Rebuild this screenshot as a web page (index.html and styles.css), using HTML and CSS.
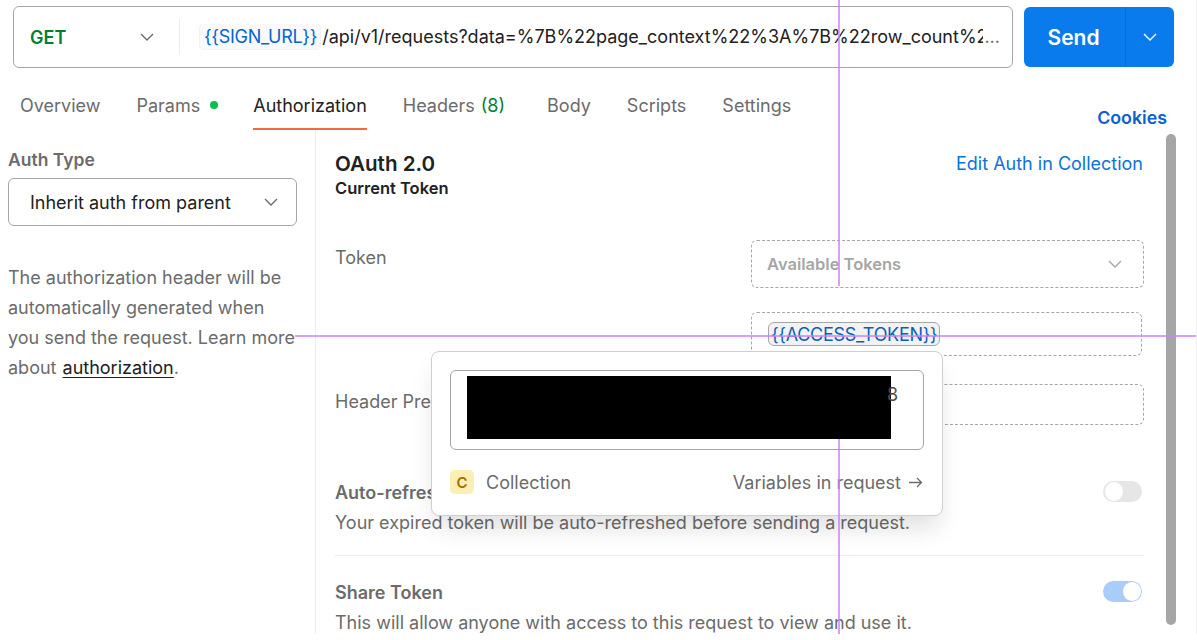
FILE: index.html
```html
<!DOCTYPE html>
<html lang="en">
<head>
<meta charset="utf-8">
<title>Request</title>
<link rel="stylesheet" href="styles.css">
</head>
<body>
<div class="page">
  <header class="request-row">
    <div class="url-box">
      <div class="method"><span class="method-name">GET</span><svg class="chev" width="14" height="8" viewBox="0 0 14 8"><path d="M1 1l6 6 6-6" fill="none" stroke="#6b6b6b" stroke-width="1.4"/></svg></div>
      <div class="url"><span class="var-chip">{{SIGN_URL}}</span> /api/v1/requests?data=%7B%22page_context%22%3A%7B%22row_count%22%3A50%7D%7D</div>
    </div>
    <div class="send">
      <span class="send-label">Send</span>
      <span class="send-arrow"><svg width="14" height="8" viewBox="0 0 14 8"><path d="M1 1l6 6 6-6" fill="none" stroke="#fff" stroke-width="1.4"/></svg></span>
    </div>
  </header>

  <nav class="tabs">
    <a class="tab">Overview</a>
    <a class="tab">Params<i class="dot"></i></a>
    <a class="tab active">Authorization</a>
    <a class="tab">Headers <span class="count">(8)</span></a>
    <a class="tab tab-body">Body</a>
    <a class="tab">Scripts</a>
    <a class="tab">Settings</a>
    <a class="cookies">Cookies</a>
  </nav>

  <main class="content">
    <aside class="left">
      <div class="auth-label">Auth Type</div>
      <div class="select">
        <span>Inherit auth from parent</span>
        <svg width="14" height="8" viewBox="0 0 14 8"><path d="M1 1l6 6 6-6" fill="none" stroke="#6b6b6b" stroke-width="1.4"/></svg>
      </div>
      <p class="help">The authorization header will be automatically generated when you send the request. Learn more about <u class="help-link">authorization</u>.</p>
    </aside>

    <section class="right">
      <div class="right-inner">
        <div class="title-row">
          <h2 class="title">OAuth 2.0</h2>
          <a class="edit-link">Edit Auth in Collection</a>
        </div>
        <div class="subtitle">Current Token</div>

        <div class="form-row token-row">
          <label class="form-label">Token</label>
          <div class="field-stack">
            <div class="dashed dashed-select"><span>Available Tokens</span><svg width="14" height="8" viewBox="0 0 14 8"><path d="M1 1l6 6 6-6" fill="none" stroke="#a6a6a6" stroke-width="1.4"/></svg></div>
            <div class="dashed dashed-input"><span class="token-chip">{{ACCESS_TOKEN}}</span></div>
          </div>
        </div>

        <div class="form-row prefix-row">
          <label class="form-label prefix-label">Header Prefix</label>
          <div class="dashed dashed-prefix"></div>
        </div>

        <div class="option option-first">
          <div class="option-text">
            <div class="option-title">Auto-refresh Token</div>
            <div class="option-desc">Your expired token will be auto-refreshed before sending a request.</div>
          </div>
          <span class="toggle"></span>
        </div>
        <div class="option option-second">
          <div class="option-text">
            <div class="option-title">Share Token</div>
            <div class="option-desc">This will allow anyone with access to this request to view and use it.</div>
          </div>
          <span class="toggle on"></span>
        </div>
      </div>
      <div class="scrollbar"></div>
    </section>
  </main>

  <div class="popup">
    <div class="popup-box"><div class="redact"></div><span class="popup-value">8</span></div>
    <div class="popup-foot">
      <span class="badge">C</span>
      <span class="popup-scope">Collection</span>
      <span class="popup-link">Variables in request <svg width="15" height="11" viewBox="0 0 15 11"><path d="M1 5.5h12.5M9 1l4.5 4.5L9 10" fill="none" stroke="#6b6b6b" stroke-width="1.3"/></svg></span>
    </div>
  </div>

  <div class="guide guide-v guide-v-top"></div>
  <div class="guide guide-v guide-v-bottom"></div>
  <div class="guide guide-h"></div>
</div>
</body>
</html>
```
FILE: styles.css
```css
* { box-sizing: border-box; }
html, body { margin: 0; padding: 0; background: #fff; }
body { font-family: Inter, "Liberation Sans", sans-serif; font-size: 18px; color: #6b6b6b; overflow: hidden; }
.page { position: relative; width: 1197px; height: 634px; overflow: hidden; border-right: 1px solid #f0f0f0; }

.request-row { display: flex; align-items: flex-start; gap: 11px; padding: 6px 0 0 13px; }
.url-box { display: flex; align-items: center; width: 1000px; height: 62px; border: 1px solid #a6a6a6; border-radius: 6px; }
.method { display: flex; align-items: center; justify-content: space-between; width: 166px; height: 36px; padding: 0 25px 0 16px; border-right: 1px solid #ededed; flex: none; }
.method-name { font-weight: 600; color: #007f31; font-size: 18px; }
.url { position: relative; flex: 1; min-width: 0; margin-right: 12px; padding: 0 0 0 19px; white-space: nowrap; overflow: hidden; color: #212121; font-size: 18px; line-height: 26px; }
.url::after { content: "..."; position: absolute; right: 0; top: 0; padding-left: 1px; background: #fff; color: #6b6b6b; }
.var-chip { color: #0265d2; background: #f9f9f9; border: 1px solid #f2f2f2; border-radius: 5px; padding: 2px 3px 2px 4px; margin-right: -4px; letter-spacing: -.3px; }
.send { display: flex; width: 150px; height: 60px; margin-top: 1px; background: #097bed; border-radius: 6px; color: #fff; }
.send-label { display: flex; align-items: center; justify-content: center; width: 102px; padding-right: 2px; font-size: 21px; font-weight: 600; border-right: 1px solid #0a6fd3; }
.send-arrow { flex: 1; display: flex; align-items: center; justify-content: center; }

.tabs { position: relative; display: flex; gap: 36px; height: 62px; padding: 0 0 0 20px; align-items: flex-end; }
.tab { display: flex; align-items: center; height: 51px; padding-top: 3px; border-bottom: 2px solid transparent; white-space: pre; }
.tab.active { color: #212121; border-bottom-color: #f26b3a; }
.tab-body { margin-left: 6px; }
.dot { width: 8px; height: 8px; border-radius: 50%; background: #0cbb52; margin-left: 10px; margin-right: -1px; }
.count { color: #007f31; margin-left: 1px; }
.cookies { position: absolute; right: 29px; top: 39px; color: #0b5fd0; font-weight: 600; font-size: 17.8px; }

.content { display: flex; height: 504px; }
.left { width: 316px; padding: 18px 18px 0 8px; border-right: 1px solid #ededed; flex: none; }
.auth-label { font-weight: 600; font-size: 17.5px; line-height: 24px; }
.select { display: flex; align-items: center; justify-content: space-between; width: 289px; height: 48px; margin-top: 6px; padding: 0 18px 0 21px; border: 1px solid #a6a6a6; border-radius: 6px; color: #212121; }
.help { margin: 37px 0 0; line-height: 30px; width: 292px; }
.help-link { color: #212121; text-underline-offset: 3px; margin-left: 1px; }

.right { position: relative; flex: 1; min-width: 0; display: flex; }
.right-inner { width: 828px; padding: 19px 0 0 19px; }
.title-row { display: flex; justify-content: space-between; align-items: center; height: 28px; }
.title { margin: 0; font-size: 20.6px; font-weight: 600; color: #212121; }
.edit-link { color: #0b72d9; margin-right: 1px; }
.subtitle { font-size: 16.5px; font-weight: 600; color: #212121; line-height: 22px; margin-top: 0; }

.form-row { display: flex; justify-content: space-between; }
.token-row { margin-top: 41px; }
.form-label { line-height: 36px; }
.field-stack { width: 393px; display: flex; flex-direction: column; gap: 24px; }
.dashed { border: 1px dashed #a6a6a6; border-radius: 6px; }
.dashed-select { display: flex; align-items: center; justify-content: space-between; height: 48px; padding: 0 21px 0 15px; color: #a6a6a6; font-size: 16.5px; font-weight: 600; }
.dashed-input { width: 391px; height: 44px; padding: 9px 16px; }
.token-chip { display: inline-block; height: 24px; line-height: 23px; padding: 0 2px; background: #f2f2f2; border: 1px solid #a6a6a6; border-radius: 6px; color: #0b5fb5; letter-spacing: -.3px; }
.prefix-row { margin-top: 28px; align-items: center; }
.prefix-label { line-height: 34px; padding-bottom: 5px; }
.dashed-prefix { width: 391px; height: 41px; }

.option { display: flex; justify-content: space-between; align-items: flex-start; }
.option-first { margin-top: 54px; padding-bottom: 19px; border-bottom: 1px solid #ededed; }
.option-second { margin-top: 23px; }
.option-title { font-size: 18px; font-weight: 600; line-height: 26px; padding-top: 1px; }
.option-desc { margin-top: 4px; line-height: 26px; }
.toggle { position: relative; width: 39px; height: 21px; margin: 2px 2px 0 0; border-radius: 11px; background: #e6e6e6; flex: none; }
.toggle::after { content: ""; position: absolute; top: 1px; left: 2px; width: 18px; height: 19px; border-radius: 50%; background: #fff; }
.toggle.on { background: #a9cdfb; }
.toggle.on::after { left: auto; right: 1px; }

.scrollbar { position: absolute; left: 850px; top: 4px; width: 10px; height: 491px; border-radius: 5px; background: #a6a6a6; }

.popup { position: absolute; left: 431px; top: 351px; width: 512px; height: 165px; padding: 18px 18px 0; background: #fff; border: 1px solid #cfcfcf; border-radius: 8px; box-shadow: 0 16px 24px -4px rgba(0,0,0,.12); }
.popup-box { display: flex; align-items: flex-start; height: 80px; padding: 5px 0 0 16px; border: 1px solid #a6a6a6; border-radius: 6px; color: #4d4d4d; }
.redact { width: 424px; height: 63px; background: #000; flex: none; }
.popup-value { margin: 10px 0 0 -4px; line-height: 18px; }
.popup-foot { display: flex; align-items: center; margin-top: 20px; height: 24px; }
.badge { width: 24px; height: 24px; display: flex; align-items: center; justify-content: center; background: #fdefb4; border-radius: 5px; color: #a86b00; font-size: 15px; font-weight: 600; }
.popup-scope { margin-left: 12px; }
.popup-link { margin-left: auto; margin-right: 1px; display: flex; align-items: center; gap: 7px; }

.guide { position: absolute; background: rgba(204,128,247,.75); pointer-events: none; }
.guide-v { left: 838px; width: 2px; }
.guide-v-top { top: 0; height: 286px; }
.guide-v-bottom { top: 439px; height: 195px; }
.guide-h { left: 295px; right: 0; top: 335px; height: 2px; }
```
